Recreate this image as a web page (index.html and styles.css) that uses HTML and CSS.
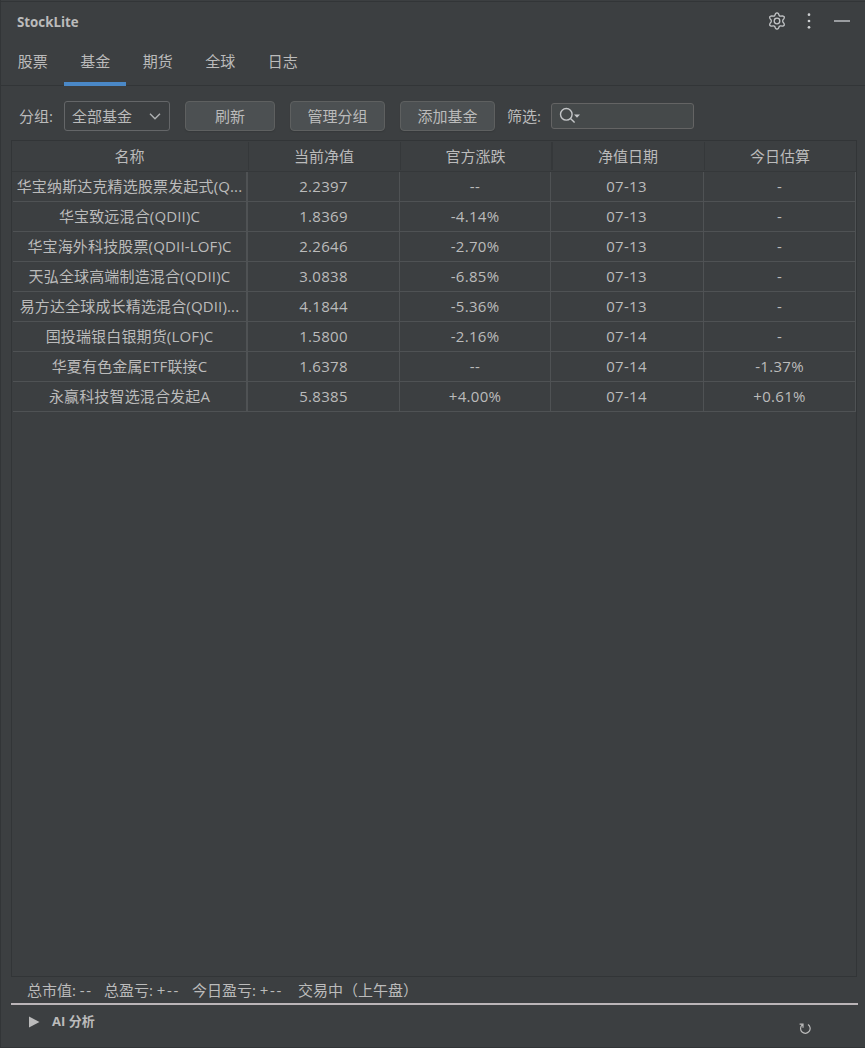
FILE: index.html
```
<!DOCTYPE html>
<html lang="zh-CN">
<head>
    <meta charset="UTF-8">
    <meta name="viewport" content="width=device-width, initial-scale=1.0">
    <title>StockLite</title>
    <link rel="stylesheet" href="styles.css">
</head>
<body>
    <div class="window">
        <header class="titlebar">
            <h1>StockLite</h1>
            <div class="actions">
                <svg class="gear" width="18" height="18" viewBox="0 0 18 18" fill="none" stroke="#c4c6c8" stroke-width="1.3" stroke-linejoin="round">
                    <path d="M7.4 1.9Q9 -.3 10.6 1.9L11.2 3.5Q11.8 4.2 12.7 4.1L14.4 3.8Q17.1 4.1 16 6.6L14.9 7.9Q14.5 9 14.9 10.1L16 11.4Q17.1 13.9 14.4 14.2L12.7 13.9Q11.8 13.8 11.2 14.5L10.6 16.1Q9 18.3 7.4 16.1L6.8 14.5Q6.2 13.8 5.3 13.9L3.6 14.2Q.9 13.9 2 11.4L3.1 10.1Q3.5 9 3.1 7.9L2 6.6Q.9 4.1 3.6 3.8L5.3 4.1Q6.2 4.2 6.8 3.5Z"/>
                    <circle cx="9" cy="9" r="2.8"/>
                </svg>
                <svg class="more" width="4" height="16" viewBox="0 0 4 16" fill="#ced0d2">
                    <circle cx="2" cy="1.7" r="1.35"/>
                    <circle cx="2" cy="8" r="1.35"/>
                    <circle cx="2" cy="14.3" r="1.35"/>
                </svg>
                <span class="minimize"></span>
            </div>
        </header>
        <nav class="tabs">
            <a>股票</a>
            <a class="active">基金</a>
            <a>期货</a>
            <a>全球</a>
            <a>日志</a>
        </nav>

        <div class="toolbar">
            <label>分组:</label>
            <div class="select">
                <span>全部基金</span>
                <svg width="12" height="8" viewBox="0 0 12 8" fill="none" stroke="#afb1b3" stroke-width="1.4"><path d="M1 1.8L6 6.7L11 1.8"/></svg>
            </div>
            <button class="refresh">刷新</button>
            <button>管理分组</button>
            <button>添加基金</button>
            <label class="filter-label">筛选:</label>
            <div class="search">
                <svg width="22" height="18" viewBox="0 0 22 18" fill="none" stroke="#c4c6c8" stroke-width="1.4">
                    <circle cx="7.3" cy="7.3" r="5.8"/>
                    <path d="M11.5 11.5L15.6 15.6"/>
                    <path d="M15 7.4H21L18 10.7Z" fill="#c4c6c8" stroke="none"/>
                </svg>
            </div>
        </div>

        <div class="table">
            <div class="head">
                <span>名称</span><span>当前净值</span><span>官方涨跌</span><span>净值日期</span><span>今日估算</span>
            </div>
            <div class="row"><span>华宝纳斯达克精选股票发起式(Q...</span><span>2.2397</span><span>--</span><span>07-13</span><span>-</span></div>
            <div class="row"><span>华宝致远混合(QDII)C</span><span>1.8369</span><span>-4.14%</span><span>07-13</span><span>-</span></div>
            <div class="row"><span>华宝海外科技股票(QDII-LOF)C</span><span>2.2646</span><span>-2.70%</span><span>07-13</span><span>-</span></div>
            <div class="row"><span>天弘全球高端制造混合(QDII)C</span><span>3.0838</span><span>-6.85%</span><span>07-13</span><span>-</span></div>
            <div class="row"><span>易方达全球成长精选混合(QDII)...</span><span>4.1844</span><span>-5.36%</span><span>07-13</span><span>-</span></div>
            <div class="row"><span>国投瑞银白银期货(LOF)C</span><span>1.5800</span><span>-2.16%</span><span>07-14</span><span>-</span></div>
            <div class="row"><span>华夏有色金属ETF联接C</span><span>1.6378</span><span>--</span><span>07-14</span><span>-1.37%</span></div>
            <div class="row"><span>永赢科技智选混合发起A</span><span>5.8385</span><span>+4.00%</span><span>07-14</span><span>+0.61%</span></div>
        </div>

        <div class="summary">
            <span class="s1">总市值: <i>--</i></span>
            <span class="s2">总盈亏: <i>+--</i></span>
            <span class="s3">今日盈亏: <i>+--</i></span>
            <span class="s4">交易中（上午盘）</span>
        </div>
        <footer class="ai">
            <svg class="arrow" width="11" height="12" viewBox="0 0 11 12" fill="#bbb"><path d="M0 .5L10.5 6L0 11.5Z"/></svg>
            <b>AI 分析</b>
            <svg class="reload" width="12" height="12" viewBox="0 0 12 12" fill="none" stroke="#bbb" stroke-width="1.2">
                <path d="M9 1.5A4.8 4.8 0 1 1 3.2 1.9M.6 1.2H4V4.8"/>
            </svg>
        </footer>
    </div>
</body>
</html>
```
FILE: styles.css
```
* {
    box-sizing: border-box;
}
body {
    margin: 0;
    background: #3c3f41;
    color: #bbb;
    font: 15px/20px "Open Sans", "Noto Sans CJK SC", sans-serif;
}
.window {
    height: 1048px;
    border-left: 1px solid #323537;
    border-bottom: 1px solid #323537;
    padding-top: 1px;
    display: flex;
    flex-direction: column;
}
.titlebar {
    height: 40px;
    border-top: 1px solid #323537;
    padding: 0 15px 0 16px;
    display: flex;
    align-items: center;
    justify-content: space-between;
}
h1 {
    margin: 0;
    font-size: 13.3px;
    font-weight: 700;
}
.actions {
    display: flex;
    align-items: center;
    margin-top: -2px;
}
.more {
    margin: 0 23px 0 21px;
}
.minimize {
    width: 16px;
    height: 2px;
    background: #9a9da0;
}
.tabs {
    height: 45px;
    border-bottom: 1px solid #323537;
    display: flex;
}
.tabs a {
    width: 62.5px;
    height: 45px;
    padding: 10px 0 0 1px;
    text-align: center;
}
.tabs .active {
    border-bottom: 4px solid #4a88c7;
}
.toolbar {
    height: 54px;
    padding: 6px 0 0 18px;
    display: flex;
    align-items: center;
}
.toolbar label {
    width: 45px;
    margin-top: -1px;
    white-space: nowrap;
}
.select {
    width: 106px;
    height: 30px;
    border: 1px solid #646668;
    border-radius: 3px;
    padding: 0 8px 0 7px;
    display: flex;
    align-items: center;
    justify-content: space-between;
}
button {
    width: 95px;
    height: 30px;
    margin: 0 0 0 15px;
    padding: 0;
    border: 1px solid #5e6060;
    border-radius: 4px;
    background: #4c5052;
    color: #bbb;
    font: inherit;
    box-shadow: 0 1px 1px #36393b;
}
.refresh {
    width: 90px;
}
.toolbar .filter-label {
    width: 44px;
    margin-left: 12px;
}
.search {
    width: 143px;
    height: 26px;
    border: 1px solid #646464;
    border-radius: 3px;
    background: #45494a;
    padding: 3px 7px;
}
.search svg {
    display: block;
}
.table {
    width: 846px;
    height: 837px;
    margin-left: 10px;
    border: 1px solid #323537;
}
.head {
    height: 31px;
    border-bottom: 1px solid #35383a;
    display: grid;
    grid-template-columns: 237px 152px 152px 152px 151px;
    padding: 1px 0 2px;
}
.head span {
    border-right: 1px solid #35383a;
    padding-right: 1px;
    text-align: center;
    line-height: 28px;
}
.head span:nth-child(3) {
    border-right-width: 2px;
}
.head span:last-child {
    border-right: none;
}
.row {
    height: 30px;
    margin-left: 1px;
    display: grid;
    grid-template-columns: 235px 152px 151px 153px 152px;
}
.row span {
    border-right: 1px solid #4f5254;
    border-bottom: 1px solid #4f5254;
    text-align: center;
    line-height: 29px;
    letter-spacing: 0.3px;
    white-space: nowrap;
}
.row span:first-child {
    border-right-width: 2px;
    letter-spacing: 0.15px;
}
.row span:nth-child(4) {
    padding-right: 1px;
}
.summary {
    height: 28px;
    width: 847px;
    margin-left: 10px;
    padding: 3px 0 0 16px;
    border-bottom: 2px solid #bbb5b8;
    display: flex;
    white-space: nowrap;
}
.summary i {
    font-style: normal;
    letter-spacing: 1.6px;
}
.s1 {
    width: 77px;
}
.s2 {
    width: 88px;
}
.s3 {
    width: 106px;
}
.ai {
    padding: 6px 0 0 28px;
    display: flex;
    align-items: flex-start;
}
.ai b {
    margin-left: 12px;
    font-size: 13px;
}
.arrow {
    margin-top: 5px;
}
.reload {
    margin: 12px 54px 0 auto;
}
```
